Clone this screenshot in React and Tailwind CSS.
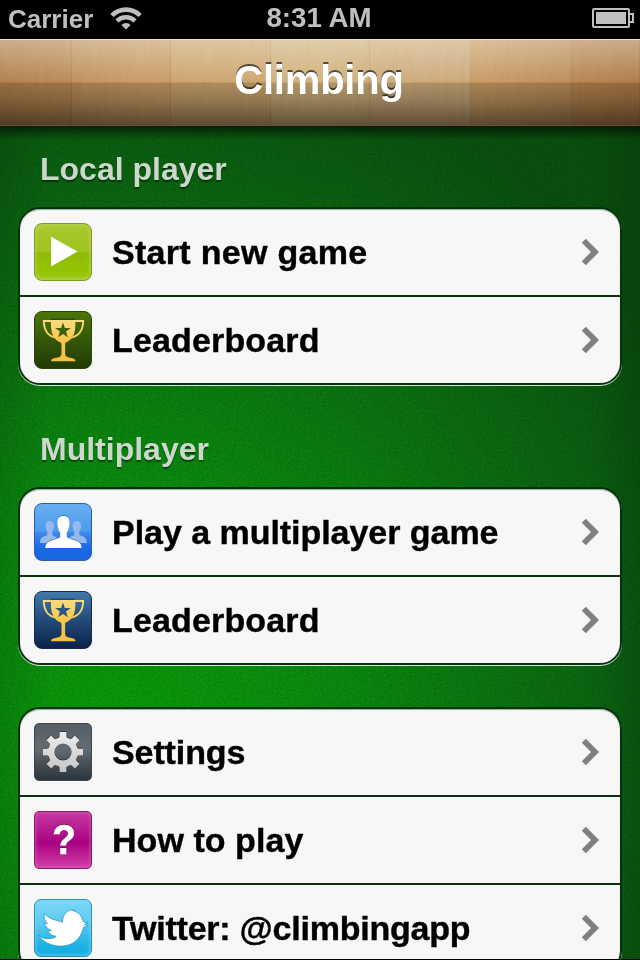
import React from "react";

const TROPHY_STAR =
  "M29 11.4l1.9 5.600h5.9l-4.700 3.600 1.700 5.700-4.800-3.400-4.800 3.400 1.700-5.700-4.700-3.600h5.900z";

function Trophy({ star }) {
  return (
    <svg viewBox="0 0 58 58" className="h-[58px] w-[58px] shrink-0">
      <defs>
        <linearGradient id="gold" x1="0" y1="8" x2="0" y2="50" gradientUnits="userSpaceOnUse">
          <stop offset="0" stopColor="#fbda80" />
          <stop offset="0.5" stopColor="#f8c84e" />
          <stop offset="1" stopColor="#f6c040" />
        </linearGradient>
      </defs>
      <path
        d="M18 10H9.800C10 19 14 25 21.500 26.600M40.500 10h8.700C49 19 45 25 37 26.600"
        fill="none"
        stroke="url(#gold)"
        strokeWidth="1.900"
      />
      <path d="M17 8.200h24" stroke="#00000080" strokeWidth="1" />
      <path
        d="M17 9h24.300c.2 6 .2 11-2 15.500-1.500 3.200-4.600 6-7.800 7l-.4 1.500v9.500c0 2.800 1.700 3.800 5 4.200 3.300.4 5.300 1.300 5.500 3.600H17c.2-2.300 2.200-3.200 5.500-3.600 3.300-.4 5-1.400 5-4.200V33l-.7-1.500c-3.200-1-6.300-3.800-7.800-7C16.800 20 16.800 15 17 9z"
        fill="url(#gold)"
      />
      <path d={TROPHY_STAR} fill={star} />
    </svg>
  );
}

function PlayIcon() {
  return (
    <svg viewBox="0 0 58 58" className="h-[58px] w-[58px] shrink-0">
      <path d="M17 13.700v29.800L43.500 28.600z" fill="#fff" />
    </svg>
  );
}

function PeopleIcon() {
  return (
    <svg viewBox="0 0 58 58" className="h-[58px] w-[58px] shrink-0">
      <g fill="#96b8ec">
        <path d="M15.700 18c3 0 4.300 1.800 4.300 4.600 0 3-.8 4.600-1.700 6v3.400c1.500 1.500 7 2 7 8H6c0-5 2-6.200 7.200-8v-3.400c-1-1.400-1.800-3-1.800-6 0-2.800 1.300-4.600 4.300-4.600z" />
        <path d="M42.800 18c-3 0-4.300 1.800-4.300 4.600 0 3 .8 4.600 1.700 6v3.400c-1.500 1.500-7 2-7 8h19.700c0-5-2-6.200-7.600-8v-3.400c1-1.400 1.800-3 1.800-6 0-2.800-1.300-4.600-4.300-4.600z" />
      </g>
      <path
        d="M29.500 13c-4.300 0-6.300 2.500-6.100 7 0 1.600.2 2.700.5 4 .4 2.600 1.300 4.200 2.300 5.500v4.300c-1 1.800-3.200 2-7.500 3.400-5 1.600-7.300 3-7.400 7.900h36.300c0-4.900-2.300-6.300-7.400-7.900-4.300-1.400-6.400-1.600-7.400-3.400v-4.300c1-1.300 1.800-2.900 2.200-5.500.3-1.300.5-2.400.5-4 .2-4.500-1.800-7-6-7z"
        transform="translate(0 -0.900)"
        fill="#2a5fae"
        fillOpacity="0.600"
      />
      <path
        d="M29.500 13c-4.300 0-6.300 2.500-6.100 7 0 1.600.2 2.700.5 4 .4 2.600 1.300 4.200 2.300 5.500v4.300c-1 1.800-3.200 2-7.500 3.400-5 1.600-7.300 3-7.400 7.900h36.300c0-4.900-2.300-6.300-7.400-7.900-4.300-1.400-6.400-1.600-7.400-3.400v-4.300c1-1.300 1.800-2.900 2.200-5.500.3-1.300.5-2.400.5-4 .2-4.500-1.800-7-6-7z"
        fill="#fff"
      />
    </svg>
  );
}

function GearIcon() {
  return (
    <svg viewBox="0 0 58 58" className="h-[58px] w-[58px] shrink-0">
      <defs>
        <linearGradient id="steel" x1="0" y1="9" x2="0" y2="49" gradientUnits="userSpaceOnUse">
          <stop offset="0" stopColor="#ededed" />
          <stop offset="1" stopColor="#c6c6c6" />
        </linearGradient>
        <mask id="gearMask">
          <rect width="58" height="58" fill="#000" />
          <circle cx="29" cy="29" r="14.800" fill="#fff" />
          {[0, 45, 90, 135, 180, 225, 270, 315].map((a) => (
            <path
              key={a}
              d="M23.500 17l2.200-3.500V9h6.600v4.500l2.200 3.500z"
              fill="#fff"
              transform={`rotate(${a} 29 29)`}
            />
          ))}
          <circle cx="29" cy="29" r="8.600" fill="#000" />
        </mask>
      </defs>
      <g transform="translate(0 -1)">
        <rect width="58" height="58" fill="#20262b" opacity="0.600" mask="url(#gearMask)" />
      </g>
      <rect width="58" height="58" fill="url(#steel)" mask="url(#gearMask)" />
    </svg>
  );
}

function BirdIcon() {
  return (
    <svg viewBox="0 0 58 58" className="h-[58px] w-[58px] shrink-0">
      <path
        d="M10.300 14.700C14.500 19 19.500 20.700 23 21.600c2 .6 3.800 1 5.400 1.700C28.600 17 31.500 12.800 36 11.300c1-.4 1.800-.8 3.200-.7l-.8 1 2.900-.3-1 1c3 .6 5.600 2.400 7 5.500 1.400 2.600 1.700 4.700 2.600 5.200l4.100.9-3.800 1.600 4.100 1.300-4.800 1.500C47.500 37 43 42.500 36 45.400c-6 2.400-14 2.200-20.500-.4-5-2-8.700-5.300-11.200-8.600 4 3 8.500 3.800 12.500 3.100 2.500-.4 4.500-1.100 5.400-2.300-3.700-.5-7-2-8.400-5.200l3.800-.5c-4-1.300-6.200-3.700-7-7.400l3 .4c-3-2.700-4-6-3.300-9.800z"
        fill="#fff"
        stroke="#1787b5"
        strokeOpacity="0.700"
        strokeWidth="0.900"
      />
    </svg>
  );
}

const tiles = {
  play: {
    className:
      "rounded-[8px] border-[#7a9c2c] bg-[linear-gradient(#a9c931_0%,#a0c31d_49%,#8fba07_51%,#93c404_85%,#9cc91c_100%)] shadow-[inset_0_0_5px_#c0d95c]",
    icon: <PlayIcon />,
  },
  trophyGreen: {
    className:
      "rounded-[8px] border-[#29440a] bg-[linear-gradient(#4b7609_0%,#345708_50%,#213b05_100%)]",
    icon: <Trophy star="#3c6108" />,
  },
  people: {
    className:
      "rounded-[8px] border-[#2c5cae] bg-[linear-gradient(#68b0f0_0%,#4c99ee_49%,#3d8aec_51%,#1a68e2_80%,#1a66e0_100%)]",
    icon: <PeopleIcon />,
  },
  trophyBlue: {
    className:
      "rounded-[8px] border-[#122c50] bg-[linear-gradient(#4179ab_0%,#25507f_45%,#0b2249_100%)]",
    icon: <Trophy star="#2c5785" />,
  },
  gear: {
    className:
      "rounded-[5px] border-[#3c444b] bg-[linear-gradient(#565d64_0%,#636c74_45%,#4c555d_65%,#2a353e_100%)]",
    icon: <GearIcon />,
  },
  question: {
    className:
      "rounded-[5px] border-[#8c1a6c] bg-[linear-gradient(#c5399f_0%,#b0128c_40%,#a9007f_55%,#c52a9c_85%,#d23fa9_100%)] shadow-[inset_0_0_4px_#d660b2]",
    icon: (
      <span className="ml-0.5 scale-x-90 pb-0.5 text-[43px] leading-[56px] font-bold text-white [-webkit-text-stroke:0.6px_#fff] [text-shadow:0_-1px_1px_#6b0a52]">
        ?
      </span>
    ),
  },
  bird: {
    className:
      "rounded-[7px] border-[#2b8fb5] bg-[linear-gradient(#7fd9f7_0%,#56c8ee_45%,#1fb2e4_80%,#12ace1_100%)] shadow-[inset_0_0_4px_#7fd8f6]",
    icon: <BirdIcon />,
  },
};

const sections = [
  {
    title: "Local player",
    rows: [
      { tile: "play", label: "Start new game", tracking: "tracking-[0.300px]" },
      { tile: "trophyGreen", label: "Leaderboard", tracking: "tracking-[0.150px]" },
    ],
  },
  {
    title: "Multiplayer",
    rows: [
      { tile: "people", label: "Play a multiplayer game", tracking: "tracking-[-0.040px]" },
      { tile: "trophyBlue", label: "Leaderboard", tracking: "tracking-[0.150px]" },
    ],
  },
  {
    rows: [
      { tile: "gear", label: "Settings", tracking: "tracking-[-0.100px]" },
      { tile: "question", label: "How to play", tracking: "tracking-[0.050px]" },
      { tile: "bird", label: "Twitter: @climbingapp", tracking: "tracking-[-0.230px]" },
    ],
  },
];

function StatusBar() {
  return (
    <div className="relative flex h-[39px] shrink-0 items-center justify-between bg-black pr-1.5 pb-[3px] pl-2 text-[#bfbfbf]">
      <div className="flex items-center gap-[17px]">
        <span className="pt-0.5 text-[26px] leading-[36px] font-bold">Carrier</span>
        <svg viewBox="0 0 32 24" className="h-6 w-8" fill="none" stroke="currentColor">
          <path d="M1.900 9.500a19.900 19.900 0 0 1 28.200 0" strokeWidth="4.600" />
          <path d="M7 15a12.700 12.700 0 0 1 18 0" strokeWidth="4.400" />
          <path d="M16 23.500l-4.600-4.600a6.500 6.500 0 0 1 9.200 0z" fill="currentColor" stroke="none" />
        </svg>
      </div>
      <span className="absolute inset-x-0 top-0 pr-0.5 text-center text-[27.700px] leading-[36px] font-bold">
        8:31 AM
      </span>
      <svg viewBox="0 0 42 20" className="h-5 w-[42px]" fill="none" stroke="currentColor" strokeWidth="2">
        <rect x="1" y="1" width="36" height="18" rx="1" />
        <rect x="4" y="4" width="30" height="12" fill="currentColor" stroke="none" />
        <path d="M38 6h3v8h-3" />
      </svg>
    </div>
  );
}

const planks = [
  { w: 72, c: "#c8975e" },
  { w: 99, c: "#cb9d65" },
  { w: 100, c: "#cea56d" },
  { w: 99, c: "#cfae75" },
  { w: 101, c: "#cfab78" },
  { w: 101, c: "#cb9d64" },
  { w: 68, c: "#c8935a" },
];

function Header() {
  return (
    <header className="relative z-10 flex h-[87px] shrink-0 justify-center overflow-hidden border-t border-[#f0dfcb]">
      <div className="absolute inset-0 flex">
        {planks.map((p, i) => (
          <div
            key={i}
            className="h-full border-r border-[#8a6538]/25"
            style={{ width: p.w, backgroundColor: p.c }}
          />
        ))}
      </div>
      <svg className="absolute inset-0 h-full w-full opacity-15 mix-blend-overlay">
        <filter id="grain">
          <feTurbulence type="fractalNoise" baseFrequency="0.2 0.03" numOctaves="4" seed="7" />
          <feColorMatrix type="saturate" values="0" />
        </filter>
        <rect width="100%" height="100%" filter="url(#grain)" />
      </svg>
      <div className="absolute inset-0 bg-[linear-gradient(90deg,#5a25003c_0%,#5a25000c_22%,#5a250000_50%,#5a25000c_75%,#5a250040_100%)]" />
      <div className="absolute inset-0 border-b border-[#6b5232] bg-[linear-gradient(#ffffff5c_0%,#ffffff06_49.500%,#00000026_50.500%,#00000044_70%,#0000008a_100%)]" />
      <h1 className="relative pr-0.5 text-[40px] leading-[80px] font-bold tracking-[-0.200px] text-white [text-shadow:0_-2px_0_#00000099]">
        Climbing
      </h1>
    </header>
  );
}

function Row({ tile, label, tracking }) {
  const t = tiles[tile];
  return (
    <li className="flex h-[88px] items-center border-b-2 border-[#06330f] pr-5 pl-3.5 last:h-[86px] last:border-b-0">
      <div
        className={`relative flex h-[58px] w-[58px] shrink-0 items-center justify-center border ${t.className}`}
      >
        {t.icon}
      </div>
      <span
        className={`ml-5 flex-1 text-[34px] leading-[58px] font-bold whitespace-nowrap text-black [-webkit-text-stroke:0.4px_#000] ${tracking}`}
      >
        {label}
      </span>
      <svg viewBox="0 0 20 28" className="h-7 w-5" fill="none">
        <path d="M3.800 2.800L15 14 3.800 25.200" stroke="#808080" strokeWidth="5.700" />
      </svg>
    </li>
  );
}

function Section({ title, rows }) {
  return (
    <section>
      {title && (
        <h2 className="mb-[18px] ml-10 pt-0.5 text-[32px] leading-[40px] font-bold text-[#cbd8cb] [text-shadow:0_2px_1px_#00000070]">
          {title}
        </h2>
      )}
      <ul className="mx-[18px] overflow-hidden rounded-[22px] border-2 border-[#06330f] bg-[#f7f7f7] shadow-[0_1px_0_#ffffffd0,inset_0_1px_1px_#8fae94]">
        {rows.map((r) => (
          <Row key={r.label} {...r} />
        ))}
      </ul>
    </section>
  );
}

export default function App() {
  return (
    <div className="flex h-[960px] w-[640px] flex-col overflow-hidden border-b border-black bg-black font-['Liberation_Sans',Arial,sans-serif]">
      <StatusBar />
      <Header />
      <main className="relative flex-1 overflow-hidden bg-[radial-gradient(ellipse_640px_700px_at_120px_600px,#088508_0%,#09760c_35%,#095c0e_68%,#08440c_100%)]">
        <svg className="absolute inset-0 h-full w-full opacity-50 mix-blend-overlay">
          <filter id="felt">
            <feTurbulence type="fractalNoise" baseFrequency="0.5" numOctaves="3" seed="3" />
            <feColorMatrix type="saturate" values="0" />
          </filter>
          <rect width="100%" height="100%" filter="url(#felt)" />
        </svg>
        <div className="absolute inset-0 bg-[linear-gradient(90deg,#0000001c_0%,#00000000_8%,#00000000_92%,#00000020_100%)]" />
        <div className="absolute inset-x-0 top-0 h-3.5 bg-linear-to-b from-black/60 to-transparent" />
        <div className="relative flex flex-col gap-[42px] pt-[21px]">
          {sections.map((s, i) => (
            <Section key={i} {...s} />
          ))}
        </div>
      </main>
    </div>
  );
}
